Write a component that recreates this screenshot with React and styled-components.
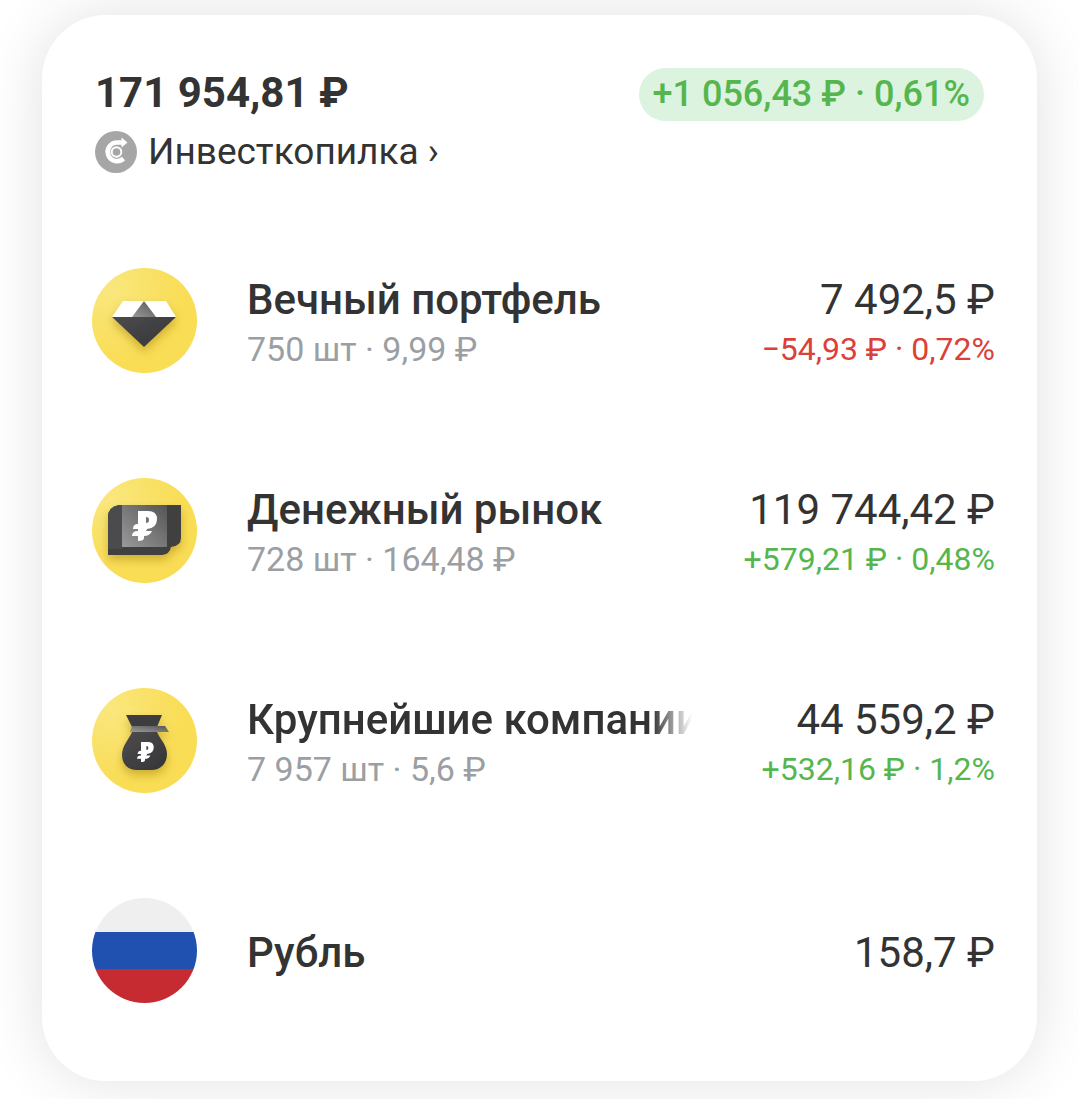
import React from "react";
import styled, { createGlobalStyle } from "styled-components";

const GlobalStyle = createGlobalStyle`
  * {
    box-sizing: border-box;
  }
  body {
    margin: 0;
    background: #fff;
    color: #333;
    font-family: Roboto, "Noto Sans", sans-serif;
  }
`;

const Page = styled.main`
  padding: 15px 42px 18px;
  overflow: hidden;
`;
const Card = styled.section`
  padding: 53px 42px 26px 50px;
  border-radius: 64px;
  background: #fff;
  box-shadow: 0 0 60px rgba(0, 0, 0, 0.12);
`;
const Header = styled.header`
  display: flex;
  justify-content: space-between;
  align-items: flex-start;
  height: 147px;
  padding: 0 11px 0 3px;
`;
const Total = styled.h1`
  margin: 0;
  font-size: 42px;
  line-height: 50px;
  font-weight: 700;
`;
const AccountLink = styled.a`
  display: flex;
  align-items: center;
  gap: 11px;
  margin-top: 8px;
  color: inherit;
  font-size: 37px;
  line-height: 52px;
  text-decoration: none;
`;
const Badge = styled.span`
  padding: 0 14px;
  border-radius: 27px;
  background: #dcf3df;
  color: #56b64e;
  font-size: 36px;
  line-height: 53px;
  font-weight: 500;
  white-space: nowrap;
`;
const List = styled.ul`
  margin: 0;
  padding: 0;
  list-style: none;
`;
const Row = styled.li`
  display: flex;
  align-items: center;
  height: 210px;
`;
const Icon = styled.svg`
  flex: none;
  width: 105px;
  height: 105px;
  margin-right: 50px;
`;
const Info = styled.div`
  flex: 1;
  min-width: 0;
  padding-top: 6px;
`;
const Name = styled.h2`
  max-width: 445px;
  margin: 0;
  overflow: hidden;
  font-size: 42px;
  line-height: 52px;
  font-weight: 500;
  white-space: nowrap;
  ${props =>
    props.$faded &&
    "mask-image: linear-gradient(to right, #000 calc(100% - 40px), transparent);"}
`;
const Details = styled.div`
  color: #9b9fa3;
  font-size: 34px;
  line-height: 46px;
`;
const Amounts = styled.div`
  flex: none;
  padding-top: 6px;
  text-align: right;
  white-space: nowrap;
`;
const Value = styled.div`
  font-size: 42px;
  line-height: 52px;
`;
const Change = styled.div`
  color: ${props => (props.$down ? "#dc4038" : "#56b64e")};
  font-size: 32px;
  line-height: 46px;
`;

const Logo = () => (
  <svg width="42" height="42" viewBox="0 0 42 42" aria-hidden="true">
    <circle cx="21" cy="21" r="21" fill="#a6a6a6" />
    <path
      d="M27 11.5H22A9.3 9.3 0 1 0 28.5 27.5"
      fill="none"
      stroke="#fff"
      strokeWidth="4.6"
    />
    <path d="M26.5 6.5L32.5 11.5L26.5 16.5Z" fill="#fff" />
    <circle cx="21.5" cy="21" r="4.8" fill="none" stroke="#fff" strokeWidth="2" />
  </svg>
);

const Coin = ({ id, children }) => (
  <Icon viewBox="0 0 105 105" aria-hidden="true">
    <defs>
      <radialGradient id={`${id}-gold`} cx="0.18" cy="0.2" r="0.7">
        <stop offset="0" stopColor="#fae77e" />
        <stop offset="1" stopColor="#f9dd55" />
      </radialGradient>
      <linearGradient id={`${id}-dark`} x1="0" y1="0" x2="1" y2="1">
        <stop offset="0" stopColor="#4c4c4e" />
        <stop offset="1" stopColor="#353537" />
      </linearGradient>
      <linearGradient id={`${id}-light`} x1="0" y1="1" x2="1" y2="0">
        <stop offset="0" stopColor="#9a9a9a" />
        <stop offset="1" stopColor="#555" />
      </linearGradient>
      <filter id={`${id}-shadow`} x="-30%" y="-30%" width="160%" height="170%">
        <feDropShadow
          dx="0"
          dy="5"
          stdDeviation="5"
          floodColor="#977600"
          floodOpacity="0.45"
        />
      </filter>
    </defs>
    <circle cx="52.5" cy="52.5" r="52.5" fill={`url(#${id}-gold)`} />
    <g filter={`url(#${id}-shadow)`}>{children}</g>
  </Icon>
);

const RoubleSign = ({ transform }) => (
  <path
    transform={transform}
    fill="#fff"
    fillRule="evenodd"
    d="M6 0H16Q25 0 25 8Q25 17 15 18L14 20H20Q18 25 12 25V27Q12 30 6 30V25H0Q0 20 6 20V18H1Q1 13 6 13ZM14 6V12Q17 12 17 9T14 6Z"
  />
);

const Diamond = () => (
  <Coin id="diamond">
    <path d="M31 33H74L84 49H20Z" fill="#fff" />
    <path d="M52 33L64 49H40Z" fill="url(#diamond-light)" />
    <path d="M20 49H84L52 79Z" fill="url(#diamond-dark)" />
  </Coin>
);

const Banknotes = () => (
  <Coin id="notes">
    <path d="M27 27H89V60Q89 68 79 69Q78 76 70 77H16V39Q16 29 27 27Z" fill="#3f3f41" />
    <path d="M27 27H30V71H16V39Q16 29 27 27Z" fill="#4c4c4e" />
    <path d="M30 27H75V69H30Z" fill="url(#notes-light)" />
    <RoubleSign transform="translate(40 33)" />
  </Coin>
);

const MoneyBag = () => (
  <Coin id="bag">
    <path d="M34 27H70L65 39H40Z" fill="#3d3d3f" />
    <path
      d="M40 44H65C68 51 75 57 75 66C75 76 68 82 60 82H45C36 82 30 76 30 67C30 58 37 51 40 44Z"
      fill="url(#bag-dark)"
    />
    <path d="M40 38H73L77 44H38Z" fill="url(#bag-light)" />
    <RoubleSign transform="translate(45 54) scale(.67)" />
  </Coin>
);

const Flag = () => (
  <Icon viewBox="0 0 105 105" aria-hidden="true">
    <clipPath id="flag-circle">
      <circle cx="52.5" cy="52.5" r="52.5" />
    </clipPath>
    <g clipPath="url(#flag-circle)">
      <path d="M0 0H105V34H0Z" fill="#efefef" />
      <path d="M0 34H105V71H0Z" fill="#2050b0" />
      <path d="M0 71H105V105H0Z" fill="#c52b31" />
    </g>
  </Icon>
);

const assets = [
  {
    name: "Вечный портфель",
    icon: Diamond,
    details: "750 шт · 9,99 ₽",
    value: "7 492,5 ₽",
    change: "−54,93 ₽ · 0,72%",
    down: true
  },
  {
    name: "Денежный рынок",
    icon: Banknotes,
    details: "728 шт · 164,48 ₽",
    value: "119 744,42 ₽",
    change: "+579,21 ₽ · 0,48%"
  },
  {
    name: "Крупнейшие компании",
    icon: MoneyBag,
    details: "7 957 шт · 5,6 ₽",
    value: "44 559,2 ₽",
    change: "+532,16 ₽ · 1,2%",
    faded: true
  },
  { name: "Рубль", icon: Flag, value: "158,7 ₽" }
];

const Asset = ({ asset }) => {
  const Picture = asset.icon;
  return (
    <Row>
      <Picture />
      <Info>
        <Name $faded={asset.faded}>{asset.name}</Name>
        {asset.details && <Details>{asset.details}</Details>}
      </Info>
      <Amounts>
        <Value>{asset.value}</Value>
        {asset.change && <Change $down={asset.down}>{asset.change}</Change>}
      </Amounts>
    </Row>
  );
};

export default () => (
  <>
    <GlobalStyle />
    <Page>
      <Card>
        <Header>
          <div>
            <Total>171 954,81 ₽</Total>
            <AccountLink href="#account">
              <Logo />
              <span>Инвесткопилка ›</span>
            </AccountLink>
          </div>
          <Badge>+1 056,43 ₽ · 0,61%</Badge>
        </Header>
        <List>
          {assets.map(asset => (
            <Asset key={asset.name} asset={asset} />
          ))}
        </List>
      </Card>
    </Page>
  </>
);
